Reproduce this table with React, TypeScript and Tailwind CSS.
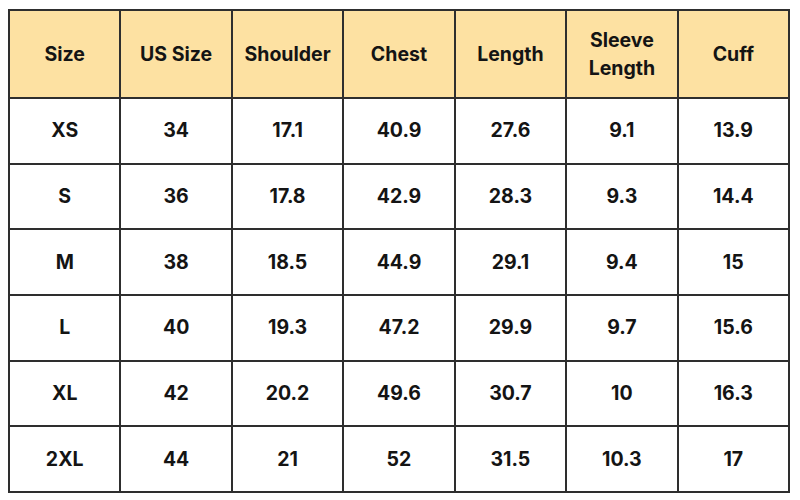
import React from "react";

const headers = ["Size", "US Size", "Shoulder", "Chest", "Length", "Sleeve Length", "Cuff"];
const rows = [
  ["XS", "34", "17.1", "40.9", "27.6", "9.1", "13.9"],
  ["S", "36", "17.8", "42.9", "28.3", "9.3", "14.4"],
  ["M", "38", "18.5", "44.9", "29.1", "9.4", "15"],
  ["L", "40", "19.3", "47.2", "29.9", "9.7", "15.6"],
  ["XL", "42", "20.2", "49.6", "30.7", "10", "16.3"],
  ["2XL", "44", "21", "52", "31.5", "10.3", "17"],
];

export default function App() {
  return (
    <div className="w-[800px] h-[500px] bg-white pl-[8px] pt-[9px]" style={{ fontFamily: "Inter, 'Open Sans', sans-serif" }}>
      <div className="w-[782px] border-l-2 border-t-2 border-[#2e2e2e] grid grid-cols-7 text-[#141414] font-bold text-[19.5px]">
        {headers.map((h) => (
          <div key={h} className="h-[88px] bg-[#fde1a2] border-r-2 border-b-2 border-[#2e2e2e] flex items-center justify-center text-center leading-[28px] px-1">
            {h === "Sleeve Length" ? (
              <span>Sleeve<br />Length</span>
            ) : (
              h
            )}
          </div>
        ))}
        {rows.map((r, i) =>
          r.map((c, j) => (
            <div key={i + "-" + j} className="h-[65.7px] bg-white border-r-2 border-b-2 border-[#2e2e2e] flex items-center justify-center">
              {c}
            </div>
          ))
        )}
      </div>
    </div>
  );
}
